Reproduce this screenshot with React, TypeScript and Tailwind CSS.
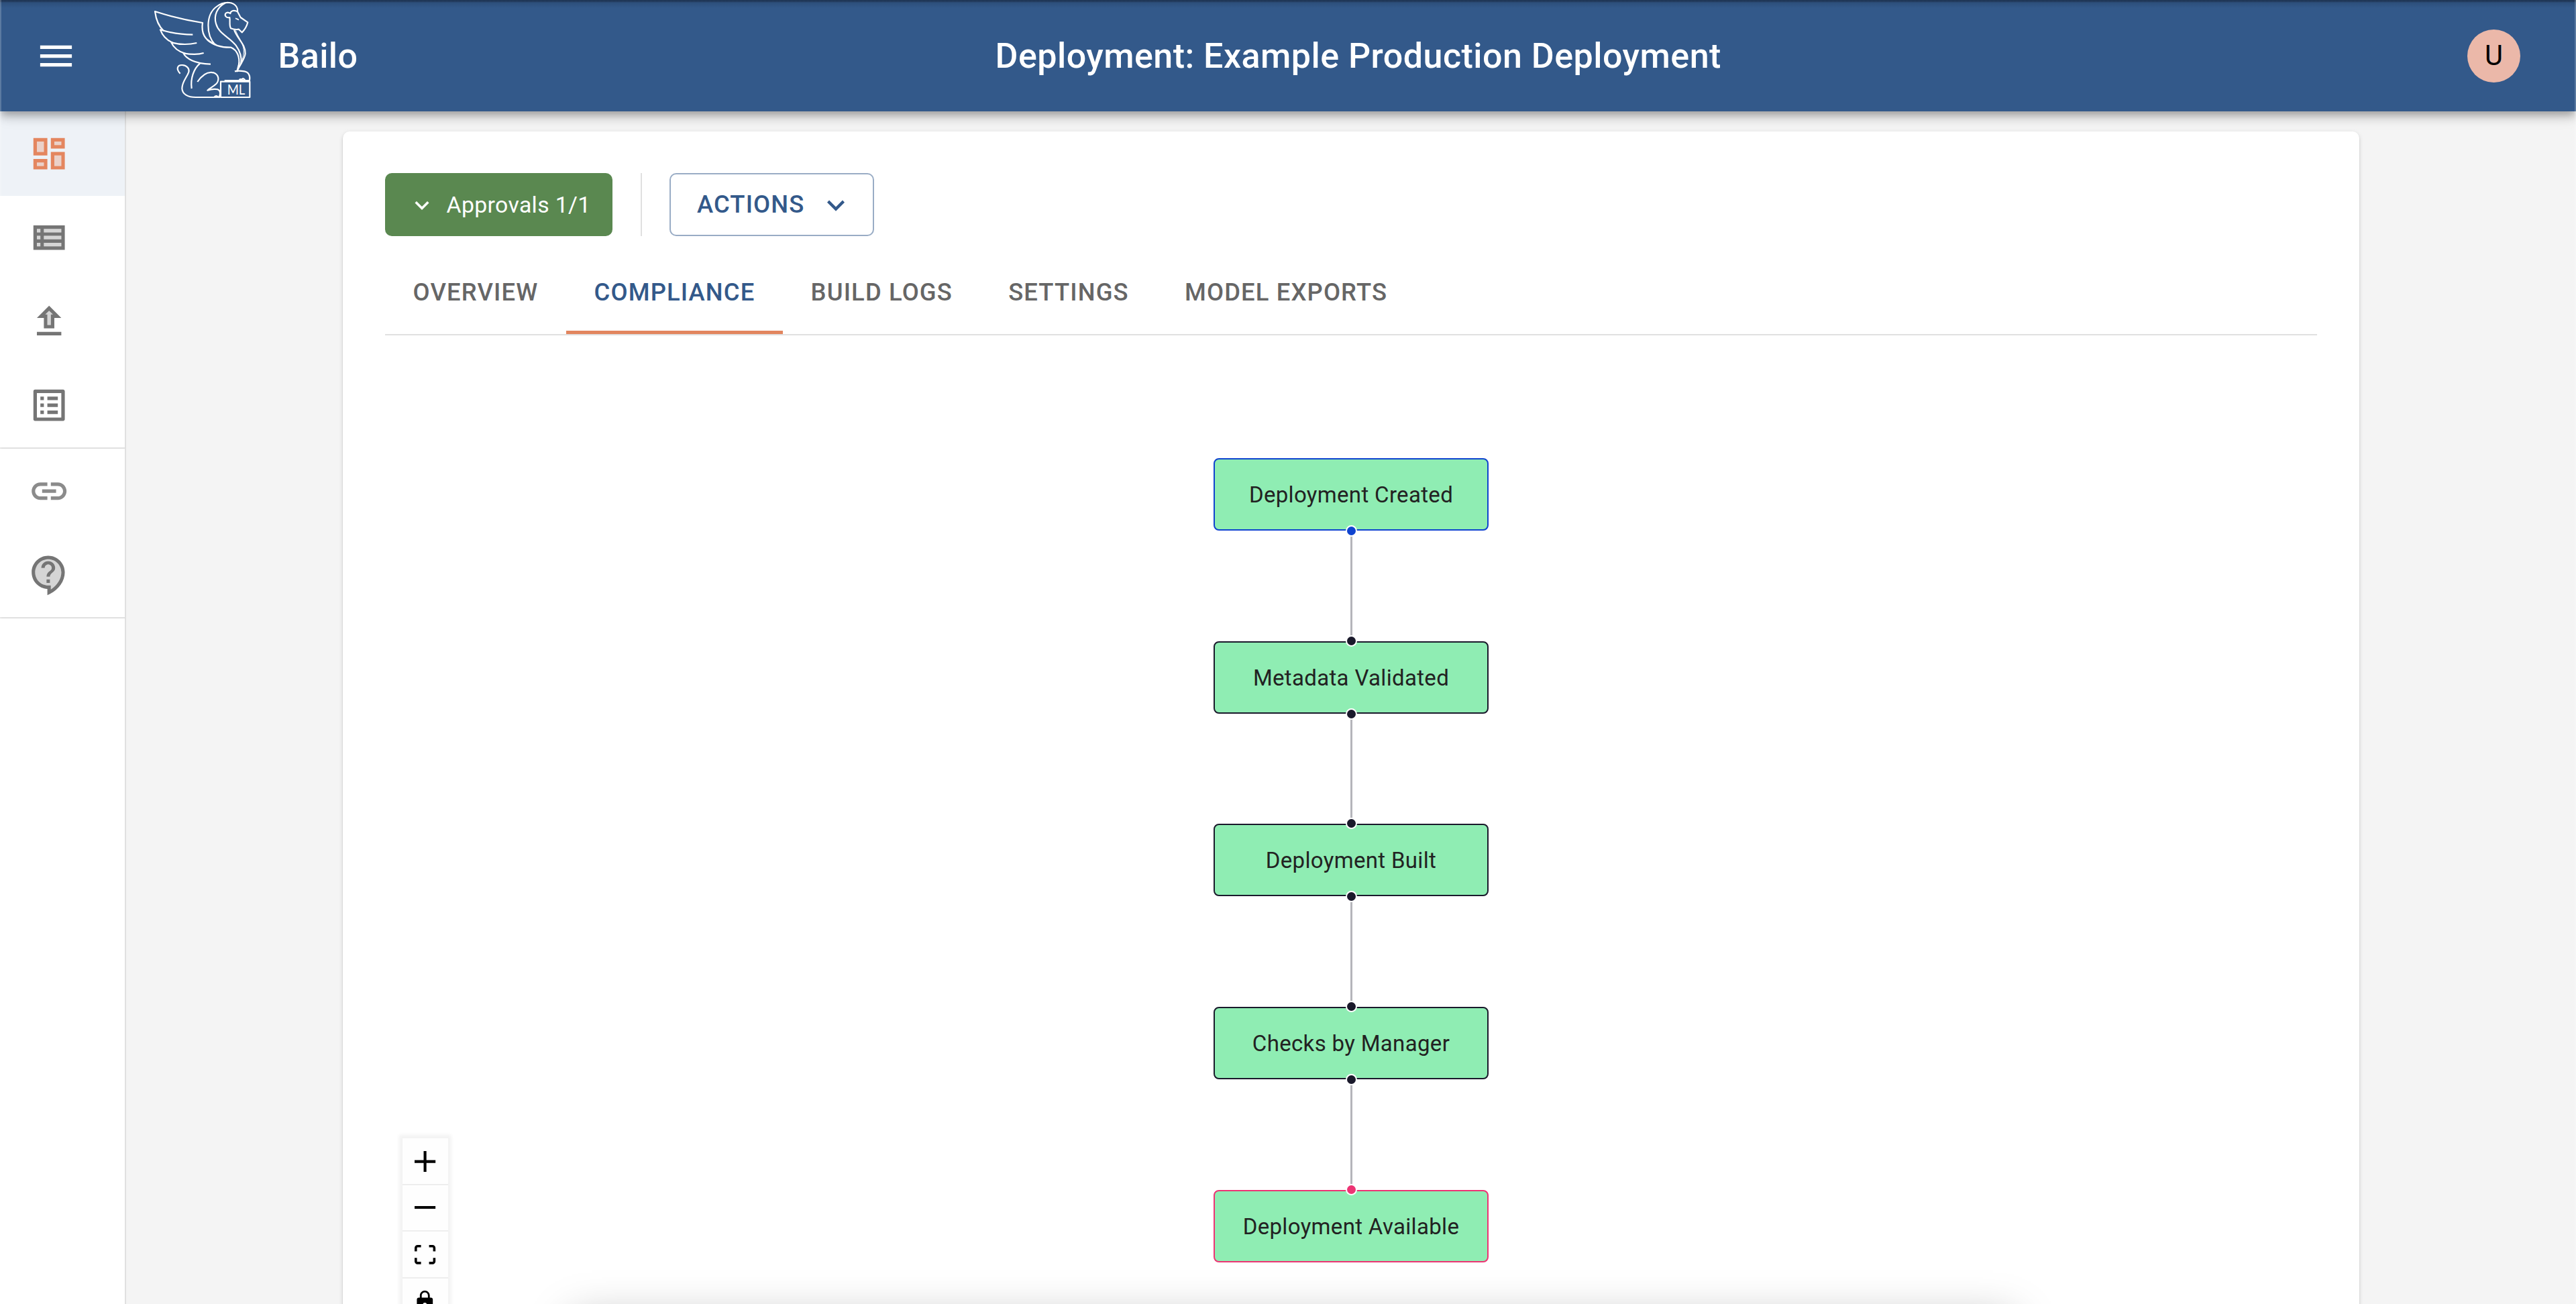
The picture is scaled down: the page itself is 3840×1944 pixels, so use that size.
import type { ReactNode } from 'react';

function Icon({ className, children }: { className: string; children: ReactNode }) {
  return (
    <svg viewBox="0 0 24 24" fill="currentColor" className={`shrink-0 ${className}`} aria-hidden="true">
      {children}
    </svg>
  );
}

function Logo() {
  return (
    <svg
      viewBox="0 0 540 480"
      className="ml-[95px] h-[160px] w-[180px] shrink-0 self-start"
      fill="none"
      stroke="white"
      strokeWidth="6.5"
      strokeLinejoin="round"
      aria-label="Bailo logo"
    >
      {/* wing */}
      <path d="M102 138C78 116 68 90 63 51Q165 84 276 102C269 148 284 182 336 200" />
      <path d="M232 155C184 154 132 147 87 133C96 158 112 178 143 191" />
      <path d="M250 192C210 201 170 199 136 190C146 213 166 230 200 240" />
      <path d="M281 237C256 245 220 243 190 238C202 262 240 285 312 287" />
      {/* mane */}
      <path d="M332 200C291 158 289 66 338 30C358 15 380 10 396 12C422 15 435 34 432 54" />
      <path d="M378 13C340 33 325 70 336 106C347 150 395 165 425 203C443 228 452 254 448 284" />
      <path d="M298 178C325 203 358 213 403 212C432 224 443 256 438 292" />
      <path d="M417 133C430 172 470 200 467 240C464 266 442 290 430 319L440 280" />
      <path d="M424 136C434 165 457 190 460 225C461 250 452 272 444 290" strokeWidth="3" />
      {/* head */}
      <path d="M432 52L446 78L478 100C474 116 466 132 452 145L438 131C424 134 410 130 402 127C394 112 400 96 397 78C382 82 373 69 379 60C386 53 394 56 400 60C402 47 418 44 432 52Z" />
      <path d="M423 82L436 88L432 84" strokeWidth="5" />
      {/* tail, back and legs */}
      <path d="M176 329C156 308 163 290 185 291C206 292 218 307 214 322C206 346 185 364 184 395C185 421 210 435 245 435H354" />
      <path d="M264 284C236 308 221 350 227 396" />
      <path d="M253 366C275 334 300 319 325 325C350 335 352 359 336 376C324 388 308 393 298 404C318 398 343 396 350 404C357 414 355 425 349 434" />
      <path d="M328 434C335 427 342 430 346 434" />
      <path d="M420 319C432 316 450 317 463 319C482 322 490 340 486 360H374M440 357C447 349 453 360 456 351C460 352 463 355 466 358" />
      <rect x="357" y="365" width="130" height="70" />
      <text
        x="386"
        y="424"
        textLength="80"
        lengthAdjust="spacingAndGlyphs"
        fill="white"
        stroke="none"
        className="font-['Lato',sans-serif] text-[62px]"
      >
        ML
      </text>
    </svg>
  );
}

function Header() {
  return (
    <header className="relative z-10 flex h-[166px] shrink-0 items-center bg-[#33598a] bg-[linear-gradient(#1f3655_0px,#22395a_2px,#2d4f7b_4px,#33598a_12px)] pr-[83px] pl-[52px] text-white shadow-[0_5.2px_10.4px_-2.6px_rgba(0,0,0,0.2),0_10.4px_13px_0_rgba(0,0,0,0.14),0_2.6px_26px_0_rgba(0,0,0,0.12)]">
      <Icon className="size-[63px]">
        <path d="M3 18h18v-2H3v2zm0-5h18v-2H3v2zm0-7v2h18V6H3z" />
      </Icon>
      <Logo />
      <span className="ml-[24.5px] pt-px text-[52px] leading-none font-medium tracking-[0.4px]">Bailo</span>
      <h1 className="flex-1 pt-px text-center text-[52px] leading-none font-medium tracking-[0.47px]">
        Deployment: Example Production Deployment
      </h1>
      <div className="ml-[162px] flex size-[79px] items-center justify-center rounded-full bg-[#ebb8a9] text-[41.6px] leading-none text-black">
        U
      </div>
    </header>
  );
}

function NavItem({ active = false, className = 'text-[#757575]', children }: { active?: boolean; className?: string; children: ReactNode }) {
  return (
    <a className={`flex items-center pl-[42px] ${active ? 'h-[126px] bg-[#eef2f7] text-[#e4865f]' : `h-[125px] ${className}`}`}>
      <Icon className="size-[62.4px]">{children}</Icon>
    </a>
  );
}

function Sidebar() {
  return (
    <nav className="w-[188px] shrink-0 border-r-2 border-[#e0e0e0] bg-white">
      <div className="h-[503px] border-b-2 border-[#e0e0e0]">
        <NavItem active>
          <path d="M5 5h4v6H5zm10 8h4v6h-4zM5 17h4v2H5zM15 5h4v2h-4z" opacity=".3" />
          <path d="M3 13h8V3H3v10zm2-8h4v6H5V5zm8 16h8V11h-8v10zm2-8h4v6h-4v-6zM13 3v6h8V3h-8zm6 4h-4V5h4v2zM3 21h8v-6H3v6zm2-4h4v2H5v-2z" />
        </NavItem>
        <NavItem>
          <path d="M5 11h2v2H5zm0 4h2v2H5zm0-8h2v2H5zm4 0h10v2H9zm0 8h10v2H9zm0-4h10v2H9z" opacity=".3" />
          <path d="M3 5v14h18V5H3zm4 12H5v-2h2v2zm0-4H5v-2h2v2zm0-4H5V7h2v2zm12 8H9v-2h10v2zm0-4H9v-2h10v2zm0-4H9V7h10v2z" />
        </NavItem>
        <NavItem>
          <path d="M9.83 8H11v6h2V8h1.17L12 5.83z" opacity=".3" />
          <path d="M5 18h14v2H5zM9 16h6v-6h4l-7-7-7 7h4v6zm3-10.17L14.17 8H13v6h-2V8H9.83L12 5.83z" />
        </NavItem>
        <NavItem>
          <path d="M11 7h6v2h-6zm0 4h6v2h-6zm0 4h6v2h-6zM7 7h2v2H7zm0 4h2v2H7zm0 4h2v2H7zM20.1 3H3.9c-.5 0-.9.4-.9.9v16.2c0 .4.4.9.9.9h16.2c.4 0 .9-.5.9-.9V3.9c0-.5-.5-.9-.9-.9zM19 19H5V5h14v14z" />
        </NavItem>
      </div>
      <div className="h-[253px] border-b-2 border-[#e0e0e0] pt-px">
        <NavItem className="text-[#8b8b8b]">
          <path d="M17 7h-4v2h4c1.65 0 3 1.35 3 3s-1.35 3-3 3h-4v2h4c2.76 0 5-2.24 5-5s-2.24-5-5-5zm-6 8H7c-1.65 0-3-1.35-3-3s1.35-3 3-3h4V7H7c-2.76 0-5 2.24-5 5s2.24 5 5 5h4v-2zm-3-4h8v2H8z" />
        </NavItem>
        <NavItem>
          <path d="M11.5 3C7.36 3 4 6.36 4 10.5S7.36 18 11.5 18H13v2.3c3.64-2.3 6-6.08 6-9.8C19 6.36 15.64 3 11.5 3zm1 13.5h-2v-2h2v2zm0-3.5h-2c0-3.25 3-3 3-5 0-1.1-.9-2-2-2s-2 .9-2 2h-2c0-2.21 1.79-4 4-4s4 1.79 4 4c0 2.5-3 2.75-3 5z" opacity=".3" />
          <path d="M11 23.59v-3.6c-5.01-.26-9-4.42-9-9.49C2 5.26 6.26 1 11.5 1S21 5.26 21 10.5c0 4.95-3.44 9.93-8.57 12.4l-1.43.69zM11.5 3C7.36 3 4 6.36 4 10.5S7.36 18 11.5 18H13v2.3c3.64-2.3 6-6.08 6-9.8C19 6.36 15.64 3 11.5 3zm-1 11.5h2v2h-2zm2-1.5h-2c0-3.25 3-3 3-5 0-1.1-.9-2-2-2s-2 .9-2 2h-2c0-2.21 1.79-4 4-4s4 1.79 4 4c0 2.5-3 2.75-3 5z" />
        </NavItem>
      </div>
    </nav>
  );
}

const CHEVRON = 'M7.41 8.59 12 13.17l4.59-4.58L18 10l-6 6-6-6 1.41-1.41z';

function Toolbar() {
  return (
    <div className="flex h-[94px] leading-none">
      <button className="flex w-[339px] items-center gap-[15.5px] rounded-[10px] bg-[#5a8850] pt-px pl-[34px] text-[33.8px] tracking-[0.35px] text-white">
        <Icon className="size-[42px]">
          <path d={CHEVRON} />
        </Icon>
        Approvals 1/1
      </button>
      <div className="mx-[42px] w-[2px] bg-[#e0e0e0]" />
      <button className="-ml-px flex w-[305px] items-center gap-[20.5px] rounded-[10px] border-2 border-[#99acc5] pt-px pl-[39px] text-[36.4px] font-medium tracking-[1.12px] text-[#33598a]">
        ACTIONS
        <Icon className="size-[52px]">
          <path d={CHEVRON} />
        </Icon>
      </button>
    </div>
  );
}

const tabs = ['OVERVIEW', 'COMPLIANCE', 'BUILD LOGS', 'SETTINGS', 'MODEL EXPORTS'];

function Tabs() {
  return (
    <div className="mt-[21px] flex h-[127px] border-b-2 border-[#e0e0e0] text-[36.4px] leading-none font-medium tracking-[1.14px]">
      {tabs.map((tab) => (
        <button
          key={tab}
          className={
            tab === 'COMPLIANCE'
              ? 'border-b-[5px] border-[#e2855f] px-[41.6px] pt-[7px] text-[#33598a]'
              : 'px-[41.6px] pt-[2px] text-[#666666]'
          }
        >
          {tab}
        </button>
      ))}
    </div>
  );
}

type FlowNode = { label: string; place: string; border: string; dot: string; first?: boolean; last?: boolean };

const nodes: FlowNode[] = [
  { label: 'Deployment Created', place: 'top-[183px]', border: 'border-[#0f43cf]', dot: 'bg-[#0f43cf]', first: true },
  { label: 'Metadata Validated', place: 'top-[456px]', border: 'border-[#1a192b]', dot: 'bg-[#1a192b]' },
  { label: 'Deployment Built', place: 'top-[728px]', border: 'border-[#1a192b]', dot: 'bg-[#1a192b]' },
  { label: 'Checks by Manager', place: 'top-[1001px]', border: 'border-[#1a192b]', dot: 'bg-[#1a192b]' },
  { label: 'Deployment Available', place: 'top-[1274px]', border: 'border-[#ed3474]', dot: 'bg-[#ed3474]', last: true },
];

function Flow() {
  return (
    <>
      {nodes.map((n) => (
        <div
          key={n.label}
          className={`absolute left-[1298px] flex h-[108px] w-[410px] items-center justify-center rounded-[8px] border-2 bg-[#8fedb3] pt-px text-[33px] leading-none tracking-[0.33px] text-[#222222] ${n.place} ${n.border}`}
        >
          {n.label}
          {!n.last && <span className="absolute top-[114px] left-[201.5px] h-[150px] w-[3px] bg-[#b5b5ba]" />}
          {!n.first && (
            <span className={`absolute -top-[11px] left-[194.5px] size-[17px] rounded-full border-2 border-white ${n.dot}`} />
          )}
          {!n.last && (
            <span className={`absolute top-[98px] left-[194.5px] size-[17px] rounded-full border-2 border-white ${n.dot}`} />
          )}
        </div>
      ))}
    </>
  );
}

const controls = [
  { name: 'zoom in', box: '0 0 32 32', d: 'M32 18.133H18.133V32h-4.266V18.133H0v-4.266h13.867V0h4.266v13.867H32z' },
  { name: 'zoom out', box: '0 0 32 5', d: 'M0 0h32v4.2H0z' },
  {
    name: 'fit view',
    box: '0 0 32 30',
    d: 'M3.692 4.63c0-.53.4-.938.939-.938h5.215V0H4.708C2.13 0 0 2.054 0 4.63v5.216h3.692V4.631zM27.354 0h-5.2v3.692h5.17c.53 0 .984.4.984.939v5.215H32V4.631A4.624 4.624 0 0027.354 0zm.954 24.83c0 .532-.4.94-.939.94h-5.215v3.768h5.215c2.577 0 4.631-2.13 4.631-4.707v-5.139h-3.692v5.139zm-23.677.94c-.531 0-.939-.4-.939-.94v-5.138H0v5.139c0 2.577 2.13 4.707 4.708 4.707h5.138V25.77H4.631z',
  },
  {
    name: 'lock',
    box: '0 0 25 32',
    d: 'M21.333 10.667H19.81V7.619C19.81 3.429 16.38 0 12.19 0 8 0 4.571 3.429 4.571 7.619v3.048H3.048A3.056 3.056 0 000 13.714v15.238A3.056 3.056 0 003.048 32h18.285a3.056 3.056 0 003.048-3.048V13.714a3.056 3.056 0 00-3.048-3.047zM12.19 24.533a3.056 3.056 0 01-3.047-3.047 3.056 3.056 0 013.047-3.048 3.056 3.056 0 013.048 3.048 3.056 3.056 0 01-3.048 3.047zm4.724-13.866H7.467V7.619c0-2.59 2.133-4.724 4.723-4.724 2.591 0 4.724 2.133 4.724 4.724v3.048z',
  },
];

function Controls() {
  return (
    <div className="absolute top-[1197px] left-[89px] w-[68px] bg-[#fefefe] shadow-[0_0_5.2px_5.2px_rgba(0,0,0,0.05)]">
      {controls.map((c) => (
        <button key={c.name} aria-label={c.name} className="flex h-[69.6px] w-full items-center justify-center border-b-2 border-[#eeeeee] pt-px">
          <svg viewBox={c.box} className="max-h-[31.2px] w-[31.2px]">
            <path d={c.d} />
          </svg>
        </button>
      ))}
    </div>
  );
}

export default function App() {
  return (
    <div className="relative flex h-[1944px] w-[3840px] flex-col overflow-hidden bg-[#f4f4f4] font-[Roboto,sans-serif]">
      <Header />
      <div className="flex min-h-0 flex-1">
        <Sidebar />
        <main className="mt-[30px] ml-[323px] flex h-[1900px] w-[3006px] flex-col rounded-t-[10px] bg-white pt-[62px] shadow-[0_5.2px_2.6px_-2.6px_rgba(0,0,0,0.2),0_2.6px_2.6px_0_rgba(0,0,0,0.14),0_2.6px_7.8px_0_rgba(0,0,0,0.12)]">
          <div className="mr-[63px] ml-[63px]">
            <Toolbar />
            <Tabs />
          </div>
          <section className="relative flex-1">
            <Flow />
            <Controls />
          </section>
        </main>
      </div>
      <div className="absolute top-[1965px] left-[852px] h-[200px] w-[2150px] shadow-[0_0_62px_rgba(0,0,0,0.27)]" />
      <div className="absolute inset-y-0 left-0 z-20 w-[2px] bg-white/20" />
      <div className="absolute inset-y-0 right-0 z-20 w-[2px] bg-white/20" />
    </div>
  );
}
